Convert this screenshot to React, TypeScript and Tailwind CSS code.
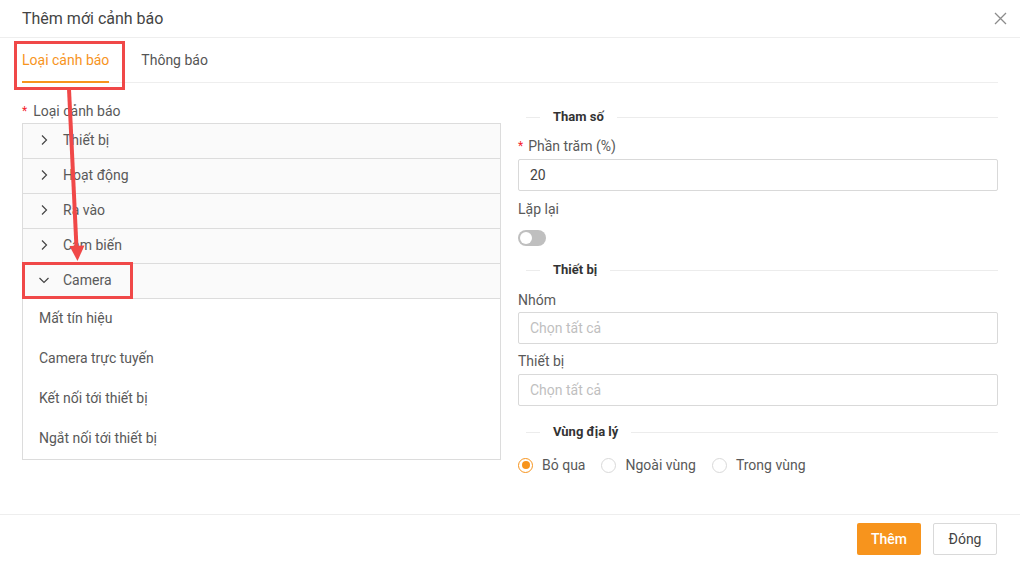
import React from 'react'

const groups = ['Thiết bị', 'Hoạt động', 'Ra vào', 'Cảm biến']
const cameraItems = ['Mất tín hiệu', 'Camera trực tuyến', 'Kết nối tới thiết bị', 'Ngắt nối tới thiết bị']

function Chevron({ open }: { open?: boolean }) {
  return (
    <svg width="12" height="12" viewBox="0 0 12 12" className="text-[#444]">
      {open ? (
        <polyline points="1.5,4 6,8.5 10.5,4" fill="none" stroke="currentColor" strokeWidth="1.2" />
      ) : (
        <polyline points="4,1.5 8.5,6 4,10.5" fill="none" stroke="currentColor" strokeWidth="1.2" />
      )}
    </svg>
  )
}

function Divider({ title, className }: { title: string; className?: string }) {
  return (
    <div className={`flex items-center h-5 ${className ?? ''}`}>
      <div className="ml-[8px] w-[14px] border-t border-[#ececec]" />
      <span className="px-[13px] text-[13px] font-bold text-[#333]">{title}</span>
      <div className="flex-1 border-t border-[#ececec]" />
    </div>
  )
}

function Radio({ label, checked }: { label: string; checked?: boolean }) {
  return (
    <label className="flex items-center mr-[16px]">
      <span
        className={`w-[15px] h-[15px] rounded-full border flex items-center justify-center ${
          checked ? 'border-[#f7941d]' : 'border-[#d9d9d9]'
        }`}
      >
        {checked && <span className="w-[8px] h-[8px] rounded-full bg-[#f7941d]" />}
      </span>
      <span className="ml-[9px]">{label}</span>
    </label>
  )
}

export default function App() {
  return (
    <div
      className="relative w-[1020px] h-[563px] bg-white overflow-hidden text-[14px] text-[#595959]"
      style={{ fontFamily: 'Roboto, "Noto Sans", sans-serif' }}
    >
      {/* header */}
      <div className="h-[38px] border-b border-[#eeeeee] flex items-center justify-between pl-[22px] pr-[13px]">
        <span className="text-[16px] text-[#444]">Thêm mới cảnh báo</span>
        <svg width="13" height="13" viewBox="0 0 13 13" className="text-[#8c8c8c]">
          <path d="M1 1 L12 12 M12 1 L1 12" stroke="currentColor" strokeWidth="1.3" />
        </svg>
      </div>

      {/* tabs */}
      <div className="mx-[22px] h-[45px] border-b border-[#eeeeee] flex">
        <div className="relative flex items-center text-[#f7941d] pt-[1px]">
          Loại cảnh báo
          <div className="absolute left-0 right-0 bottom-[-1px] h-[2px] bg-[#f7941d]" />
        </div>
        <div className="flex items-center ml-[32px] text-[#555] pt-[1px]">Thông báo</div>
      </div>

      {/* body */}
      <div className="h-[431px] flex pl-[22px] pr-[22px] gap-[17px]">
        <div className="w-[479px] pt-[18px]">
          <div className="h-5 flex items-center">
            <span className="text-[#f5222d] text-[12px] mr-[6px]">*</span>
            <span>Loại cảnh báo</span>
          </div>
          <div className="mt-[2px] border border-[#dcdcdc]">
            {groups.map((g) => (
              <div key={g} className="h-[35px] bg-[#fafafa] border-b border-[#dcdcdc] flex items-center pl-[15px] pb-[2px]">
                <Chevron />
                <span className="ml-[13px]">{g}</span>
              </div>
            ))}
            <div className="h-[35px] bg-[#fafafa] border-b border-[#dcdcdc] flex items-center pl-[15px] pb-[2px]">
              <Chevron open />
              <span className="ml-[13px]">Camera</span>
            </div>
            <div className="bg-white">
              {cameraItems.map((c) => (
                <div key={c} className="h-[40px] flex items-center pl-[16px] pb-[2px]">
                  {c}
                </div>
              ))}
            </div>
          </div>
        </div>

        <div className="flex-1 flex flex-col">
          <Divider title="Tham số" className="mt-[24px]" />
          <div className="mt-[9px] h-5 flex items-center">
            <span className="text-[#f5222d] text-[12px] mr-[5px]">*</span>
            <span>Phần trăm (%)</span>
          </div>
          <div className="mt-[3px] h-[32px] border border-[#d9d9d9] rounded-[2px] flex items-center px-[11px] text-[#444]">
            20
          </div>
          <div className="mt-[8px] h-5 flex items-center">Lặp lại</div>
          <div className="mt-[11px] w-[28px] h-[16px] rounded-full bg-[#bfbfbf] flex items-center px-[2px]">
            <span className="w-[12px] h-[12px] rounded-full bg-white" />
          </div>
          <Divider title="Thiết bị" className="mt-[14px]" />
          <div className="mt-[10px] h-5 flex items-center">Nhóm</div>
          <div className="mt-[2px] h-[32px] border border-[#d9d9d9] rounded-[2px] flex items-center px-[11px] text-[#bfbfbf]">
            Chọn tất cả
          </div>
          <div className="mt-[7px] h-5 flex items-center">Thiết bị</div>
          <div className="mt-[3px] h-[32px] border border-[#d9d9d9] rounded-[2px] flex items-center px-[11px] text-[#bfbfbf]">
            Chọn tất cả
          </div>
          <Divider title="Vùng địa lý" className="mt-[16px]" />
          <div className="mt-[13px] h-5 flex items-center">
            <Radio label="Bỏ qua" checked />
            <Radio label="Ngoài vùng" />
            <Radio label="Trong vùng" />
          </div>
        </div>
      </div>

      {/* footer */}
      <div className="h-[49px] border-t border-[#eeeeee] flex justify-end items-start pt-[8px] pr-[23px] gap-[12px]">
        <button className="w-[64px] h-[32px] rounded-[2px] bg-[#f7941d] text-white font-medium">Thêm</button>
        <button className="w-[64px] h-[32px] rounded-[2px] border border-[#d9d9d9] bg-white text-[#444]">Đóng</button>
      </div>

      {/* annotations */}
      <div className="absolute left-[14px] top-[41px] w-[111px] h-[49px] border-[3px] border-[#f04848]" />
      <div className="absolute left-[22px] top-[262px] w-[111px] h-[37px] border-[3px] border-[#f04848]" />
      <svg className="absolute left-0 top-0 pointer-events-none" width="1020" height="563">
        <line x1="69" y1="89" x2="76.5" y2="248" stroke="#f04848" strokeWidth="4" />
        <polygon points="69.5,246 84.5,245.5 77.5,261" fill="#f04848" />
      </svg>
    </div>
  )
}
